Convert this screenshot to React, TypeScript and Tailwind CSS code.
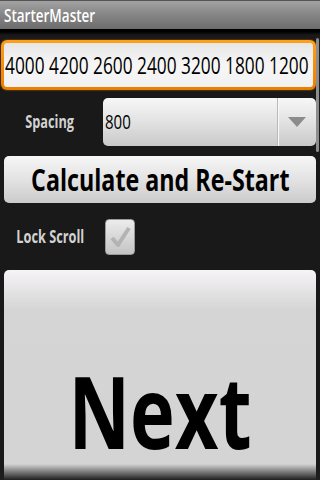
import type { ReactNode } from "react";
import clsx from "clsx";

// text in the shot is squeezed horizontally, so every label gets scaled on x
function Sq({ children, className }: { children: ReactNode; className?: string }) {
  return (
    <span className={clsx("inline-block whitespace-nowrap", className ?? "", !className?.includes("scale-x") && "scale-x-[0.75]")}>
      {children}
    </span>
  );
}

export default function App() {
  return (
    <main className="relative h-[480px] w-[320px] overflow-hidden bg-[#191919] font-['Open_Sans',sans-serif]">
      <div className="flex h-[29px] items-center border-t border-[#555] bg-gradient-to-b from-[#a2a2a2] via-[#858585] to-[#6c6c6c] px-[4px]">
        <Sq className="origin-left text-[18px] font-semibold text-white">StarterMaster</Sq>
      </div>
      <div className="h-[6px] bg-gradient-to-b from-[#000] to-[#191919]" />

      <div className="flex w-[316px] flex-col pt-[5px]">
        <div className="ml-[1px] h-[50px] w-[315px] rounded-[6px] bg-gradient-to-b from-[#ff9f1a] to-[#e97f00] p-[3px] shadow-[0_0_2px_#c76a00]">
          <div className="flex h-full items-center overflow-hidden rounded-[3px] bg-gradient-to-b from-[#e6e6e6] via-[#f6f6f6] to-[#f2f2f2] pl-[1px]">
            <Sq className="origin-left scale-x-[0.72] text-[24px] text-black">4000 4200 2600 2400 3200 1800 1200</Sq>
          </div>
        </div>

        <div className="mt-[8px] flex h-[48px] items-center">
          <div className="flex w-[100px] justify-center">
            <Sq className="text-[17px] font-bold text-[#d2d2d2]">Spacing</Sq>
          </div>
          <div className="ml-[3px] flex h-full flex-1 overflow-hidden rounded-[5px] bg-gradient-to-b from-[#f7f7f7] via-[#e2e2e2] to-[#c9c9c9]">
            <div className="flex flex-1 items-center pl-[2px]">
              <Sq className="origin-left text-[20px] text-black">800</Sq>
            </div>
            <div className="flex w-[39px] items-center justify-center border-l border-[#b8b8b8] shadow-[inset_1px_0_0_#fafafa]">
              <svg width="18" height="10" viewBox="0 0 18 10">
                <polygon points="0,0 18,0 9,10" fill="#8c8c8c" />
              </svg>
            </div>
          </div>
        </div>

        <button className="ml-[4px] mt-[10px] flex h-[47px] w-[312px] items-center justify-center rounded-[5px] bg-gradient-to-b from-[#f6f6f6] via-[#e3e3e3] to-[#cbcbcb]">
          <Sq className="text-[31px] font-bold text-black">Calculate and Re-Start</Sq>
        </button>

        <div className="flex h-[67px] items-center">
          <div className="flex w-[100px] justify-center">
            <Sq className="text-[17px] font-bold text-[#d2d2d2]">Lock Scroll</Sq>
          </div>
          <div className="ml-[5px] flex h-[36px] w-[30px] items-center justify-center rounded-[4px] border border-[#9a9a9a] bg-gradient-to-b from-[#ececec] to-[#c4c4c4]">
            <svg width="24" height="26" viewBox="0 0 24 26">
              <polyline points="4,14 10,21 21,4" fill="none" stroke="#b3b3b3" strokeWidth="4" strokeLinejoin="round" />
            </svg>
          </div>
        </div>

        <button className="ml-[4px] flex h-[280px] w-[312px] items-center justify-center rounded-[5px] bg-[linear-gradient(to_bottom,#f6f4f6_0px,#d5d5d5_40px,#d3d3d3_100%)]">
          <Sq className="text-[101px] font-bold leading-none text-black">Next</Sq>
        </button>
      </div>

      <div className="absolute right-[1px] top-[38px] h-[114px] w-[3px] rounded-full bg-[#8d8d8d]" />
      <div className="absolute bottom-0 left-0 h-[16px] w-full bg-gradient-to-b from-transparent to-[#1e1e1e]" />
    </main>
  );
}
